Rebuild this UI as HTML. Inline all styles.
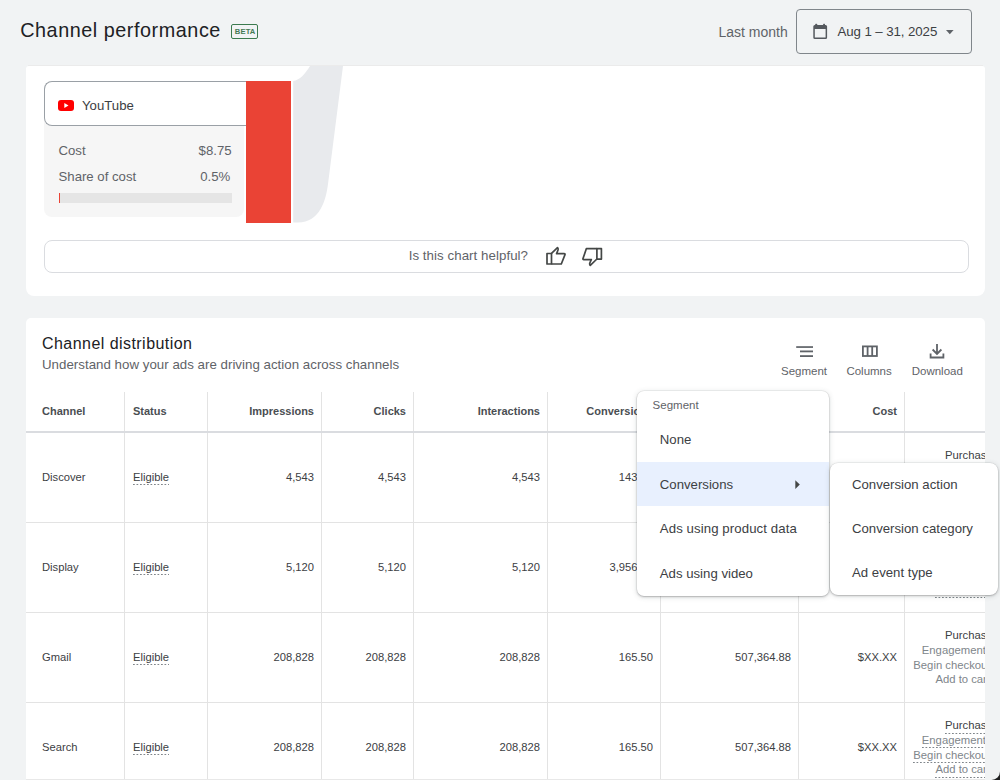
<!DOCTYPE html>
<html><head><meta charset="utf-8">
<style>
*{box-sizing:border-box;margin:0;padding:0}
html,body{width:1000px;height:780px;overflow:hidden;background:#f1f3f4;font-family:"Liberation Sans",sans-serif;color:#202124;position:relative}
.a{position:absolute;white-space:nowrap;line-height:1}
.elig{padding-bottom:2px;background:linear-gradient(90deg,#80868b 50%,transparent 0) 0 100%/3.5px 1px repeat-x}
.und{padding-bottom:2.5px;background:linear-gradient(90deg,#80868b 55%,transparent 0) 0 100%/3.5px 1px repeat-x}
</style></head><body>
<div class="a" style="left:20.20px;top:20.64px;font-size:19.8px;color:#202124;letter-spacing:0.55px">Channel performance</div>
<div class="a" style="left:231px;top:24px;width:27px;height:15px;border:1.2px solid #3b7a4e;border-radius:2px"></div>
<div class="a" style="left:234.80px;top:28.37px;font-size:7.6px;color:#447a55;font-weight:bold;letter-spacing:0.15px">BETA</div>
<div class="a" style="left:718.50px;top:24.65px;font-size:14px;color:#5f6368">Last month</div>
<div class="a" style="left:796px;top:9px;width:176px;height:45px;border:1px solid #80868b;border-radius:4px"></div>
<svg class="a" style="left:0;top:0" width="1000" height="60" viewBox="0 0 1000 60"><g fill="#55595e"><path fill-rule="evenodd" d="M814.8 24.9h10.8q1.5 0 1.5 1.5v11q0 1.5-1.5 1.5H814.8q-1.5 0-1.5-1.5v-11q0-1.5 1.5-1.5zM814.8 28.9v8.5h10.8V28.9z"/><rect x="815.3" y="23.8" width="1.8" height="2" rx=".5"/><rect x="823.2" y="23.8" width="1.8" height="2" rx=".5"/></g></svg>
<div class="a" style="left:837.50px;top:24.74px;font-size:13.3px;color:#3c4043;letter-spacing:-0.1px">Aug 1 – 31, 2025</div>
<svg class="a" style="left:946px;top:29.5px" width="8" height="5" viewBox="0 0 8 5"><path fill="#5f6368" d="M0 0h7.6L3.8 4.2z"/></svg>
<div class="a" style="left:28px;top:65px;width:955px;height:1px;background:#ebebeb"></div>
<div class="a" style="left:26px;top:66px;width:959px;height:230px;background:#fff;border-radius:3px 3px 8px 8px"></div>
<svg class="a" style="left:0;top:0" width="1000" height="300" viewBox="0 0 1000 300"><path fill="#e8eaed" d="M310 66 C305 74 300 80 293.2 81 L293.2 222.5 L298 222.5 C320 222.5 326 200 328 184 L343 66 Z"/></svg>
<div class="a" style="left:43.5px;top:81px;width:200px;height:136px;background:#f6f6f6;border-radius:8px"></div>
<div class="a" style="left:43.5px;top:81px;width:206px;height:45px;background:#fff;border:1px solid #9aa0a6;border-right:none;border-radius:8px 0 0 8px"></div>
<div class="a" style="left:246.2px;top:81.2px;width:44.5px;height:141.6px;background:#ea4335"></div>
<svg class="a" style="left:58px;top:100px" width="16" height="11" viewBox="0 0 16 11"><rect width="16" height="11" rx="3" fill="#ff0000"/><path d="M6.3 3v5l4.2-2.5z" fill="#fff"/></svg>
<div class="a" style="left:82.00px;top:98.83px;font-size:13.2px;color:#3c4043">YouTube</div>
<div class="a" style="left:58.50px;top:144.03px;font-size:13.2px;color:#5f6368">Cost</div>
<div class="a" style="left:-168.40px;width:400px;text-align:right;top:144.03px;font-size:13.2px;color:#5f6368">$8.75</div>
<div class="a" style="left:58.50px;top:169.83px;font-size:13.2px;color:#5f6368">Share of cost</div>
<div class="a" style="left:-169.80px;width:400px;text-align:right;top:169.83px;font-size:13.2px;color:#5f6368">0.5%</div>
<div class="a" style="left:58.5px;top:193.2px;width:173px;height:9.5px;background:#e5e5e5"></div>
<div class="a" style="left:58.5px;top:193.2px;width:1.6px;height:9.5px;background:#ea4335"></div>
<div class="a" style="left:43.5px;top:240.4px;width:925px;height:32.6px;border:1px solid #dadce0;border-radius:8px"></div>
<div class="a" style="left:408.70px;top:248.64px;font-size:13.3px;color:#5f6368;letter-spacing:0.05px">Is this chart helpful?</div>
<svg class="a" style="left:0;top:0" width="1000" height="300" viewBox="0 0 1000 300">
  <g fill="none" stroke="#444746" stroke-width="1.7" stroke-linejoin="round">
    <path d="M547 253.5h4.5V264H547z"/>
    <path d="M551.5 253.3L557.5 247.6Q558.4 248.5 558 250L556.6 253.6H564.2Q565.2 253.6 565 254.6L561.3 264H551.5"/>
    <path d="M601.4 248.6h-4.5v10.5h4.5z"/>
    <path d="M596.9 259L590.3 265.4Q589.4 264.6 589.8 263L591.3 259.6H583.7Q582.7 259.6 583 258.6L586.4 248.6H596.9"/>
  </g></svg>
<div class="a" style="left:26px;top:318px;width:959px;height:462px;background:#fff;border-radius:5px 5px 0 0"></div>
<div class="a" style="left:42.00px;top:336.06px;font-size:16px;color:#202124;letter-spacing:0.45px">Channel distribution</div>
<div class="a" style="left:42.00px;top:357.74px;font-size:13.3px;color:#5f6368;letter-spacing:0.015px">Understand how your ads are driving action across channels</div>
<svg class="a" style="left:0;top:0" width="1000" height="400" viewBox="0 0 1000 400">
  <g fill="#5f6368">
    <rect x="796.2" y="346.2" width="16.8" height="1.7"/>
    <rect x="800" y="350.5" width="13" height="1.8"/>
    <rect x="800" y="355.2" width="13" height="1.8"/>
  </g>
  <g fill="none" stroke="#5f6368" stroke-width="1.8">
    <rect x="862.9" y="346.4" width="14" height="9.6"/>
    <path d="M867.6 346.4v9.6M872.2 346.4v9.6"/>
    <path d="M937 344v9.5M932.6 349.5l4.4 4.4 4.4-4.4M930.6 353.5v4h12.8v-4"/>
  </g></svg>
<div class="a" style="left:781.00px;top:366.27px;font-size:11.5px;color:#5f6368">Segment</div>
<div class="a" style="left:846.40px;top:366.27px;font-size:11.5px;color:#5f6368">Columns</div>
<div class="a" style="left:911.70px;top:366.27px;font-size:11.5px;color:#5f6368">Download</div>
<div class="a" style="left:26px;top:392px;width:959px;height:388px;overflow:hidden">
<div class="a" style="left:98px;top:0;width:1px;height:400px;background:#e3e3e3"></div>
<div class="a" style="left:181px;top:0;width:1px;height:400px;background:#e3e3e3"></div>
<div class="a" style="left:295px;top:0;width:1px;height:400px;background:#e3e3e3"></div>
<div class="a" style="left:387px;top:0;width:1px;height:400px;background:#e3e3e3"></div>
<div class="a" style="left:521px;top:0;width:1px;height:400px;background:#e3e3e3"></div>
<div class="a" style="left:634px;top:0;width:1px;height:400px;background:#e3e3e3"></div>
<div class="a" style="left:772px;top:0;width:1px;height:400px;background:#e3e3e3"></div>
<div class="a" style="left:878px;top:0;width:1px;height:400px;background:#e3e3e3"></div>
<div class="a" style="left:0;top:39px;width:959px;height:1.5px;background:#dadce0"></div>
<div class="a" style="left:0;top:129.5px;width:959px;height:1px;background:#e3e3e3"></div>
<div class="a" style="left:0;top:219.5px;width:959px;height:1px;background:#e3e3e3"></div>
<div class="a" style="left:0;top:309.5px;width:959px;height:1px;background:#e3e3e3"></div>
<div class="a" style="left:16.00px;top:14.39px;font-size:11px;color:#4a4e52;font-weight:bold">Channel</div>
<div class="a" style="left:107.00px;top:14.39px;font-size:11px;color:#4a4e52;font-weight:bold">Status</div>
<div class="a" style="left:-112.00px;width:400px;text-align:right;top:14.39px;font-size:11px;color:#4a4e52;font-weight:bold">Impressions</div>
<div class="a" style="left:-20.00px;width:400px;text-align:right;top:14.39px;font-size:11px;color:#4a4e52;font-weight:bold">Clicks</div>
<div class="a" style="left:114.00px;width:400px;text-align:right;top:14.39px;font-size:11px;color:#4a4e52;font-weight:bold">Interactions</div>
<div class="a" style="left:227.00px;width:400px;text-align:right;top:14.39px;font-size:11px;color:#4a4e52;font-weight:bold">Conversions</div>
<div class="a" style="left:365.00px;width:400px;text-align:right;top:14.39px;font-size:11px;color:#4a4e52;font-weight:bold">Conv. value</div>
<div class="a" style="left:471.00px;width:400px;text-align:right;top:14.39px;font-size:11px;color:#4a4e52;font-weight:bold">Cost</div>
<div class="a" style="left:16.00px;top:79.52px;font-size:11.2px;color:#3c4043">Discover</div>
<div class="a" style="left:107.00px;top:79.52px;font-size:11.2px;color:#3c4043"><span class="elig">Eligible</span></div>
<div class="a" style="left:-112.00px;width:400px;text-align:right;top:79.52px;font-size:11.2px;color:#3c4043">4,543</div>
<div class="a" style="left:-20.00px;width:400px;text-align:right;top:79.52px;font-size:11.2px;color:#3c4043">4,543</div>
<div class="a" style="left:114.00px;width:400px;text-align:right;top:79.52px;font-size:11.2px;color:#3c4043">4,543</div>
<div class="a" style="left:227.00px;width:400px;text-align:right;top:79.52px;font-size:11.2px;color:#3c4043">143.00</div>
<div class="a" style="left:365.00px;width:400px;text-align:right;top:79.52px;font-size:11.2px;color:#3c4043">2,145.00</div>
<div class="a" style="left:471.00px;width:400px;text-align:right;top:79.52px;font-size:11.2px;color:#3c4043">$XX.XX</div>
<div class="a" style="left:919.00px;top:58.23px;font-size:11.3px;color:#3c4043">Purchase</div>
<div class="a" style="left:895.80px;top:72.90px;font-size:11.3px;color:#80868b">Engagement</div>
<div class="a" style="left:887.30px;top:87.57px;font-size:11.3px;color:#80868b">Begin checkout</div>
<div class="a" style="left:909.40px;top:102.24px;font-size:11.3px;color:#80868b">Add to cart</div>
<div class="a" style="left:16.00px;top:169.52px;font-size:11.2px;color:#3c4043">Display</div>
<div class="a" style="left:107.00px;top:169.52px;font-size:11.2px;color:#3c4043"><span class="elig">Eligible</span></div>
<div class="a" style="left:-112.00px;width:400px;text-align:right;top:169.52px;font-size:11.2px;color:#3c4043">5,120</div>
<div class="a" style="left:-20.00px;width:400px;text-align:right;top:169.52px;font-size:11.2px;color:#3c4043">5,120</div>
<div class="a" style="left:114.00px;width:400px;text-align:right;top:169.52px;font-size:11.2px;color:#3c4043">5,120</div>
<div class="a" style="left:227.00px;width:400px;text-align:right;top:169.52px;font-size:11.2px;color:#3c4043">3,956.00</div>
<div class="a" style="left:365.00px;width:400px;text-align:right;top:169.52px;font-size:11.2px;color:#3c4043">5,130.00</div>
<div class="a" style="left:471.00px;width:400px;text-align:right;top:169.52px;font-size:11.2px;color:#3c4043">$XX.XX</div>
<div class="a" style="left:919.00px;top:148.23px;font-size:11.3px;color:#3c4043"><span class="und">Purchase</span></div>
<div class="a" style="left:895.80px;top:162.90px;font-size:11.3px;color:#80868b"><span class="und">Engagement</span></div>
<div class="a" style="left:887.30px;top:177.57px;font-size:11.3px;color:#80868b"><span class="und">Begin checkout</span></div>
<div class="a" style="left:909.40px;top:192.24px;font-size:11.3px;color:#80868b"><span class="und">Add to cart</span></div>
<div class="a" style="left:16.00px;top:259.52px;font-size:11.2px;color:#3c4043">Gmail</div>
<div class="a" style="left:107.00px;top:259.52px;font-size:11.2px;color:#3c4043"><span class="elig">Eligible</span></div>
<div class="a" style="left:-112.00px;width:400px;text-align:right;top:259.52px;font-size:11.2px;color:#3c4043">208,828</div>
<div class="a" style="left:-20.00px;width:400px;text-align:right;top:259.52px;font-size:11.2px;color:#3c4043">208,828</div>
<div class="a" style="left:114.00px;width:400px;text-align:right;top:259.52px;font-size:11.2px;color:#3c4043">208,828</div>
<div class="a" style="left:227.00px;width:400px;text-align:right;top:259.52px;font-size:11.2px;color:#3c4043">165.50</div>
<div class="a" style="left:365.00px;width:400px;text-align:right;top:259.52px;font-size:11.2px;color:#3c4043">507,364.88</div>
<div class="a" style="left:471.00px;width:400px;text-align:right;top:259.52px;font-size:11.2px;color:#3c4043">$XX.XX</div>
<div class="a" style="left:919.00px;top:238.23px;font-size:11.3px;color:#3c4043">Purchase</div>
<div class="a" style="left:895.80px;top:252.90px;font-size:11.3px;color:#80868b">Engagement</div>
<div class="a" style="left:887.30px;top:267.57px;font-size:11.3px;color:#80868b">Begin checkout</div>
<div class="a" style="left:909.40px;top:282.24px;font-size:11.3px;color:#80868b">Add to cart</div>
<div class="a" style="left:16.00px;top:349.52px;font-size:11.2px;color:#3c4043">Search</div>
<div class="a" style="left:107.00px;top:349.52px;font-size:11.2px;color:#3c4043"><span class="elig">Eligible</span></div>
<div class="a" style="left:-112.00px;width:400px;text-align:right;top:349.52px;font-size:11.2px;color:#3c4043">208,828</div>
<div class="a" style="left:-20.00px;width:400px;text-align:right;top:349.52px;font-size:11.2px;color:#3c4043">208,828</div>
<div class="a" style="left:114.00px;width:400px;text-align:right;top:349.52px;font-size:11.2px;color:#3c4043">208,828</div>
<div class="a" style="left:227.00px;width:400px;text-align:right;top:349.52px;font-size:11.2px;color:#3c4043">165.50</div>
<div class="a" style="left:365.00px;width:400px;text-align:right;top:349.52px;font-size:11.2px;color:#3c4043">507,364.88</div>
<div class="a" style="left:471.00px;width:400px;text-align:right;top:349.52px;font-size:11.2px;color:#3c4043">$XX.XX</div>
<div class="a" style="left:919.00px;top:328.23px;font-size:11.3px;color:#3c4043"><span class="und">Purchase</span></div>
<div class="a" style="left:895.80px;top:342.90px;font-size:11.3px;color:#80868b"><span class="und">Engagement</span></div>
<div class="a" style="left:887.30px;top:357.57px;font-size:11.3px;color:#80868b"><span class="und">Begin checkout</span></div>
<div class="a" style="left:909.40px;top:372.24px;font-size:11.3px;color:#80868b"><span class="und">Add to cart</span></div>
</div>
<div class="a" style="left:26px;top:778.5px;width:959px;height:1.5px;background:#e8e8e8"></div>
<div class="a" style="left:637px;top:391px;width:192px;height:204.5px;background:#fff;border-radius:7px;box-shadow:0 0 0 0.5px rgba(0,0,0,.08),0 1px 2px rgba(60,64,67,.3),0 1px 5px 1px rgba(60,64,67,.12);overflow:hidden">
<div class="a" style="left:15.60px;top:8.77px;font-size:11.5px;color:#5f6368">Segment</div>
<div class="a" style="left:22.80px;top:42.23px;font-size:13.2px;color:#3c4043">None</div>
<div class="a" style="left:0;top:71.19999999999999px;width:192px;height:43.5px;background:#e8f0fe"></div>
<div class="a" style="left:22.80px;top:86.73px;font-size:13.2px;color:#3c4043">Conversions</div>
<svg class="a" style="left:158px;top:88.60000000000002px" width="6" height="10" viewBox="0 0 6 10"><path d="M0.3 0.3L4.8 4.6 0.3 9z" fill="#444746"/></svg>
<div class="a" style="left:22.80px;top:131.43px;font-size:13.2px;color:#3c4043;letter-spacing:0.1px">Ads using product data</div>
<div class="a" style="left:22.80px;top:175.53px;font-size:13.2px;color:#3c4043">Ads using video</div>
</div>
<div class="a" style="left:830px;top:462.5px;width:168px;height:132px;background:#fff;border-radius:8px;box-shadow:0 0 0 0.5px rgba(0,0,0,.08),0 1px 2px rgba(60,64,67,.3),0 1px 5px 1px rgba(60,64,67,.12)">
<div class="a" style="left:22.00px;top:15.03px;font-size:13.2px;color:#3c4043">Conversion action</div>
<div class="a" style="left:22.00px;top:59.23px;font-size:13.2px;color:#3c4043">Conversion category</div>
<div class="a" style="left:22.00px;top:103.83px;font-size:13.2px;color:#3c4043">Ad event type</div>
</div>
<svg class="a" style="left:985px;top:765px" width="15" height="15" viewBox="0 0 15 15"><path d="M15 6.5V15H6.5A8.5 8.5 0 0 0 15 6.5z" fill="#1f1f1f"/></svg>
</body></html>
